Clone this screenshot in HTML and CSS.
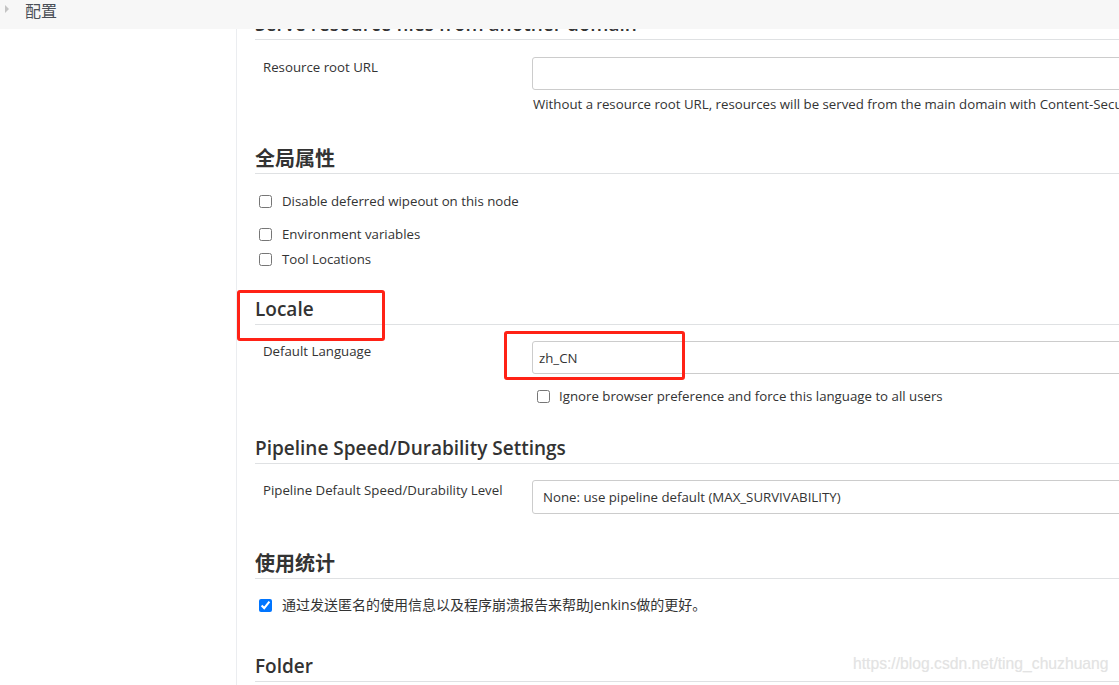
FILE: index.html
```html
<!DOCTYPE html>
<html lang="zh">
<head>
<meta charset="utf-8">
<title>配置</title>
<link rel="stylesheet" href="styles.css">
</head>
<body>
<div class="topbar">
  <span class="crumb-arrow"></span>
  <span class="crumb">配置</span>
</div>
<div class="layout">
  <aside class="sidebar"></aside>
  <main class="main">
    <section class="sec sec-resource">
      <h2 class="sec-title">Serve resource files from another domain</h2>
      <div class="row row-first">
        <label class="row-label">Resource root URL</label>
        <div class="row-field">
          <input class="text-input" type="text" value="">
          <div class="desc">Without a resource root URL, resources will be served from the main domain with Content-Security-Policy set.</div>
        </div>
      </div>
    </section>

    <section class="sec sec-global">
      <h2 class="sec-title cjk">全局属性</h2>
      <div class="check-list">
        <label class="check-row check-gap"><input type="checkbox" class="cb"><span>Disable deferred wipeout on this node</span></label>
        <label class="check-row check-gap2"><input type="checkbox" class="cb"><span>Environment variables</span></label>
        <label class="check-row"><input type="checkbox" class="cb"><span>Tool Locations</span></label>
      </div>
    </section>

    <section class="sec sec-locale">
      <h2 class="sec-title">Locale</h2>
      <div class="row row-first">
        <label class="row-label">Default Language</label>
        <div class="row-field">
          <input class="text-input" type="text" value="zh_CN">
          <label class="check-row field-check"><input type="checkbox" class="cb"><span>Ignore browser preference and force this language to all users</span></label>
        </div>
      </div>
    </section>

    <section class="sec sec-pipeline">
      <h2 class="sec-title">Pipeline Speed/Durability Settings</h2>
      <div class="row row-first">
        <label class="row-label">Pipeline Default Speed/Durability Level</label>
        <div class="row-field">
          <div class="select-box">None: use pipeline default (MAX_SURVIVABILITY)</div>
        </div>
      </div>
    </section>

    <section class="sec sec-usage">
      <h2 class="sec-title cjk">使用统计</h2>
      <div class="check-list">
        <label class="check-row"><input type="checkbox" class="cb" checked><span class="cjk-text">通过发送匿名的使用信息以及程序崩溃报告来帮助Jenkins做的更好。</span></label>
      </div>
    </section>

    <section class="sec sec-folder">
      <h2 class="sec-title">Folder</h2>
    </section>
  </main>
</div>
<div class="mark mark-locale"></div>
<div class="mark mark-lang"></div>
<div class="watermark">https://blog.csdn.net/ting_chuzhuang</div>
</body>
</html>
```

FILE: styles.css
```css
html, body {
  margin: 0;
  padding: 0;
  background: #fff;
  overflow: hidden;
  height: 685px;
}
body {
  font-family: "Open Sans", "Noto Sans CJK SC", sans-serif;
  font-size: 13.25px;
  color: #333;
  position: relative;
}
.topbar {
  position: absolute;
  left: 0;
  top: 0;
  width: 1119px;
  height: 29px;
  background: #f7f7f7;
  z-index: 5;
  display: flex;
  align-items: flex-start;
}
.crumb-arrow {
  width: 0;
  height: 0;
  border-top: 4px solid transparent;
  border-bottom: 4px solid transparent;
  border-left: 4px solid #c4c4c4;
  margin-left: 5px;
  margin-top: 5px;
}
.crumb {
  margin-left: 16px;
  margin-top: 0;
  font-family: "Noto Sans CJK SC", sans-serif;
  font-size: 16px;
  line-height: 20px;
  color: #4a4f57;
}
.layout {
  display: flex;
  width: 1500px;
}
.sidebar {
  width: 236px;
  flex: none;
  border-right: 1px solid #ebedf0;
  height: 685px;
}
.main {
  flex: 1;
  padding-left: 18px;
  padding-top: 12px;
}
.sec-title {
  margin: 0;
  font-size: 19px;
  font-weight: 600;
  line-height: 24px;
  padding-bottom: 3px;
  border-bottom: 1px solid #dfe1e3;
  color: #333;
}
.sec-title.cjk {
  font-family: "Noto Sans CJK SC", sans-serif;
  font-weight: 700;
  font-size: 20px;
}
.row {
  display: grid;
  grid-template-columns: 269px 1fr;
  padding-left: 8px;
}
.row-first {
  margin-top: 17px;
}
.row-label {
  padding-top: 1px;
  line-height: 18px;
}
.text-input {
  display: block;
  box-sizing: border-box;
  width: 100%;
  height: 33px;
  border: 1px solid #ccc;
  border-radius: 3px;
  padding: 0 6px;
  font-family: "Open Sans", sans-serif;
  font-size: 13.25px;
  color: #333;
  background: #fff;
  margin: 0;
}
.desc {
  margin-top: 5px;
  line-height: 18px;
  white-space: nowrap;
  padding-left: 1px;
}
.select-box {
  box-sizing: border-box;
  height: 34px;
  border: 1px solid #ccc;
  border-radius: 3px;
  padding: 0 10px;
  line-height: 32px;
  white-space: nowrap;
}
.sec-global { margin-top: 33px; }
.sec-locale { margin-top: 29px; }
.sec-pipeline { margin-top: 31px; }
.sec-usage { margin-top: 37px; }
.sec-folder { margin-top: 40px; }
.sec-locale .row-first { margin-top: 16px; }
.sec-pipeline .row-first { margin-top: 16px; }
.sec-pipeline .row-label { padding-top: 1px; }

.check-list {
  margin-top: 18px;
  display: flex;
  flex-direction: column;
}
.sec-usage .check-list { margin-top: 17px; }
.check-row {
  display: flex;
  align-items: center;
  line-height: 18px;
  white-space: nowrap;
}
.check-gap { margin-bottom: 15px; }
.check-gap2 { margin-bottom: 7px; }
.cb {
  width: 13px;
  height: 13px;
  margin: 0 10px 0 4px;
  flex: none;
}
.field-check {
  margin-top: 13px;
}
.field-check .cb {
  margin-left: 5px;
  margin-right: 9px;
}
.cjk-text {
  font-family: "Open Sans", "Noto Sans CJK SC", sans-serif;
  font-size: 14px;
}
.mark {
  position: absolute;
  border: 3px solid #ff2216;
  border-radius: 3px;
  box-sizing: border-box;
  z-index: 6;
}
.mark-locale {
  left: 237px;
  top: 290px;
  width: 148px;
  height: 51px;
}
.mark-lang {
  left: 504px;
  top: 331px;
  width: 181px;
  height: 49px;
}
.watermark {
  position: absolute;
  left: 853px;
  top: 655px;
  font-family: "Liberation Sans", Arial, sans-serif;
  font-size: 15.7px;
  color: #e3e3e3;
  text-shadow: 0 0 1px #f2f2f2;
  z-index: 6;
  white-space: nowrap;
}
```
